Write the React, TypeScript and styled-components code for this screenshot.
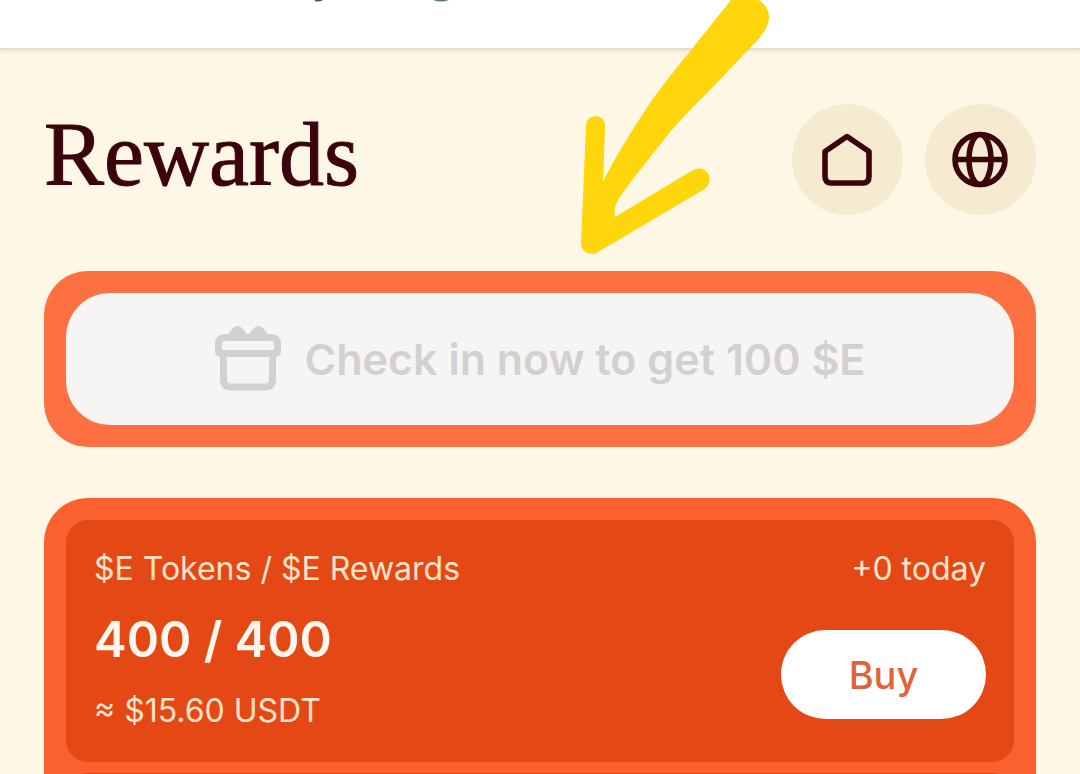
import React from "react";
import styled, { createGlobalStyle } from "styled-components";

const GlobalStyle = createGlobalStyle`
  * { box-sizing: border-box; }
  body { margin: 0; background: #fff7e6; }
`;

const Page = styled.div`
  position: relative;
  display: flex;
  flex-direction: column;
  height: 100vh;
  overflow: hidden;
  background: #fff7e6;
  font-family: Inter, "Liberation Sans", sans-serif;
`;

const TopBar = styled.div`
  flex: none;
  height: 50px;
  background: #ffffff;
  border-bottom: 2px solid #dfdfd2;
  box-shadow: 0 1px 4px rgba(120, 110, 80, 0.14);
`;

const TopBarMarks = styled.svg`
  display: block;
  margin-left: 312px;
`;

const Content = styled.main`
  flex: none;
  display: flex;
  flex-direction: column;
  padding: 54px 44px 0;
`;

const Header = styled.header`
  display: flex;
  align-items: flex-start;
  justify-content: space-between;
  margin-bottom: 56px;
`;

const Title = styled.h1`
  margin: 0;
  color: #3b040d;
  font-family: "Liberation Serif", "Times New Roman", serif;
  font-size: 90px;
  font-weight: 400;
  line-height: 102px;
  -webkit-text-stroke: 1px #3b040d;
`;

const Actions = styled.nav`
  display: flex;
  gap: 22px;
`;

const RoundButton = styled.button`
  display: grid;
  place-items: center;
  width: 111px;
  height: 111px;
  padding: 0;
  border: 0;
  border-radius: 50%;
  background: #f6ead0;
  color: #3b040d;
`;

const Card = styled.section<{ $tone: string }>`
  display: flex;
  flex-direction: column;
  gap: 11px;
  margin-bottom: 51px;
  padding: 22px;
  border-radius: 44px;
  background: ${(p) => p.$tone};
`;

const CheckInButton = styled.button`
  display: flex;
  align-items: center;
  justify-content: center;
  gap: 24px;
  width: 100%;
  height: 132px;
  padding: 0;
  border: 0;
  border-radius: 44px;
  background: #f6f5f3;
  color: #d2d1cf;
  font-family: inherit;
  font-size: 43px;
  font-weight: 600;
`;

const Panel = styled.div`
  display: flex;
  justify-content: space-between;
  min-height: 242px;
  padding: 28px;
  border-radius: 22px;
  background: #e44915;
`;

const Column = styled.div<{ $end?: boolean }>`
  display: flex;
  flex-direction: column;
  align-items: ${(p) => (p.$end ? "flex-end" : "flex-start")};
`;

const Caption = styled.p`
  margin: 0;
  color: #ffe3cb;
  font-size: 32px;
  line-height: 42px;
`;

const Balance = styled.p`
  margin: 20px 0;
  color: #fff6ec;
  font-size: 49px;
  font-weight: 600;
  line-height: 60px;
`;

const BuyButton = styled.button`
  width: 205px;
  height: 89px;
  margin-top: 40px;
  padding: 0;
  border: 0;
  border-radius: 45px;
  background: #ffffff;
  color: #e0633c;
  font-family: inherit;
  font-size: 38px;
  font-weight: 500;
`;

const Arrow = styled.svg`
  position: absolute;
  top: 0;
  left: 50%;
  width: 260px;
  height: 270px;
  pointer-events: none;
`;

const HomeIcon = () => (
  <svg width="57" height="57" viewBox="0 0 57 57" fill="none" stroke="currentColor" strokeWidth="5.6" strokeLinejoin="round" aria-hidden="true">
    <path d="M6 20.500 28 5.500 50 20.500V45.500Q50 52 44 52H12Q6 52 6 45.500Z" />
  </svg>
);

const GlobeIcon = () => (
  <svg width="57" height="57" viewBox="0 0 57 57" fill="none" stroke="currentColor" strokeWidth="5.6" aria-hidden="true">
    <circle cx="28" cy="28.500" r="25" />
    <ellipse cx="28" cy="28.500" rx="11" ry="25" />
    <path d="M3 28.500H53" />
  </svg>
);

const GiftIcon = () => (
  <svg width="66" height="66" viewBox="0 0 66 66" fill="none" stroke="currentColor" strokeWidth="7" strokeLinejoin="round" aria-hidden="true">
    <path d="M8.500 28V53.500Q8.500 61 16 61H50Q57.500 61 57.500 53.500V28" />
    <path d="M3.500 25V18Q3.500 11.500 10 11.500H56Q62.500 11.500 62.500 18V25Q62.500 27.500 60 27.500H6Q3.500 27.500 3.500 25Z" />
    <path d="M12 11C14 7 18 0 22.500 0C27 0 30 6 33 10C36 6 39 0 43.500 0C48 0 52 7 54 11Z" fill="currentColor" stroke="none" />
  </svg>
);

export default function App() {
  return (
    <Page>
      <GlobalStyle />
      <TopBar>
        <TopBarMarks width="140" height="4" viewBox="0 0 140 4" aria-hidden="true">
          <path d="M2 0H11Q8 2 4 1.500Z" fill="#4b5558" />
          <path d="M121 0H137Q129 3 121 0Z" fill="#5c7377" />
        </TopBarMarks>
      </TopBar>
      <Content>
        <Header>
          <Title>Rewards</Title>
          <Actions>
            <RoundButton aria-label="Home"><HomeIcon /></RoundButton>
            <RoundButton aria-label="Language"><GlobeIcon /></RoundButton>
          </Actions>
        </Header>
        <Card $tone="#fc7042">
          <CheckInButton>
            <GiftIcon />
            Check in now to get 100 $E
          </CheckInButton>
        </Card>
        <Card $tone="#fb602f">
          <Panel>
            <Column>
              <Caption>$E Tokens / $E Rewards</Caption>
              <Balance>400 / 400</Balance>
              <Caption>≈ $15.60 USDT</Caption>
            </Column>
            <Column $end>
              <Caption>+0 today</Caption>
              <BuyButton>Buy</BuyButton>
            </Column>
          </Panel>
          <Panel />
        </Card>
      </Content>
      <Arrow viewBox="0 0 260 270" fill="#fed60b" aria-hidden="true">
        <path d="M191 0L147 55C134 71 121 87 110 103C93 129 76 155 63 182L65 126C65 113 46 113 46 126L41 242C40 251 50 257 58 252L163 190C177 181 167 163 153 170L75 217C74 210 75 206 78 200C85 189 92 180 100 170L130 132C142 118 155 105 167 93L210 48C217 41 223 35 227 26C232 15 227 5 219 0Z" />
      </Arrow>
    </Page>
  );
}
